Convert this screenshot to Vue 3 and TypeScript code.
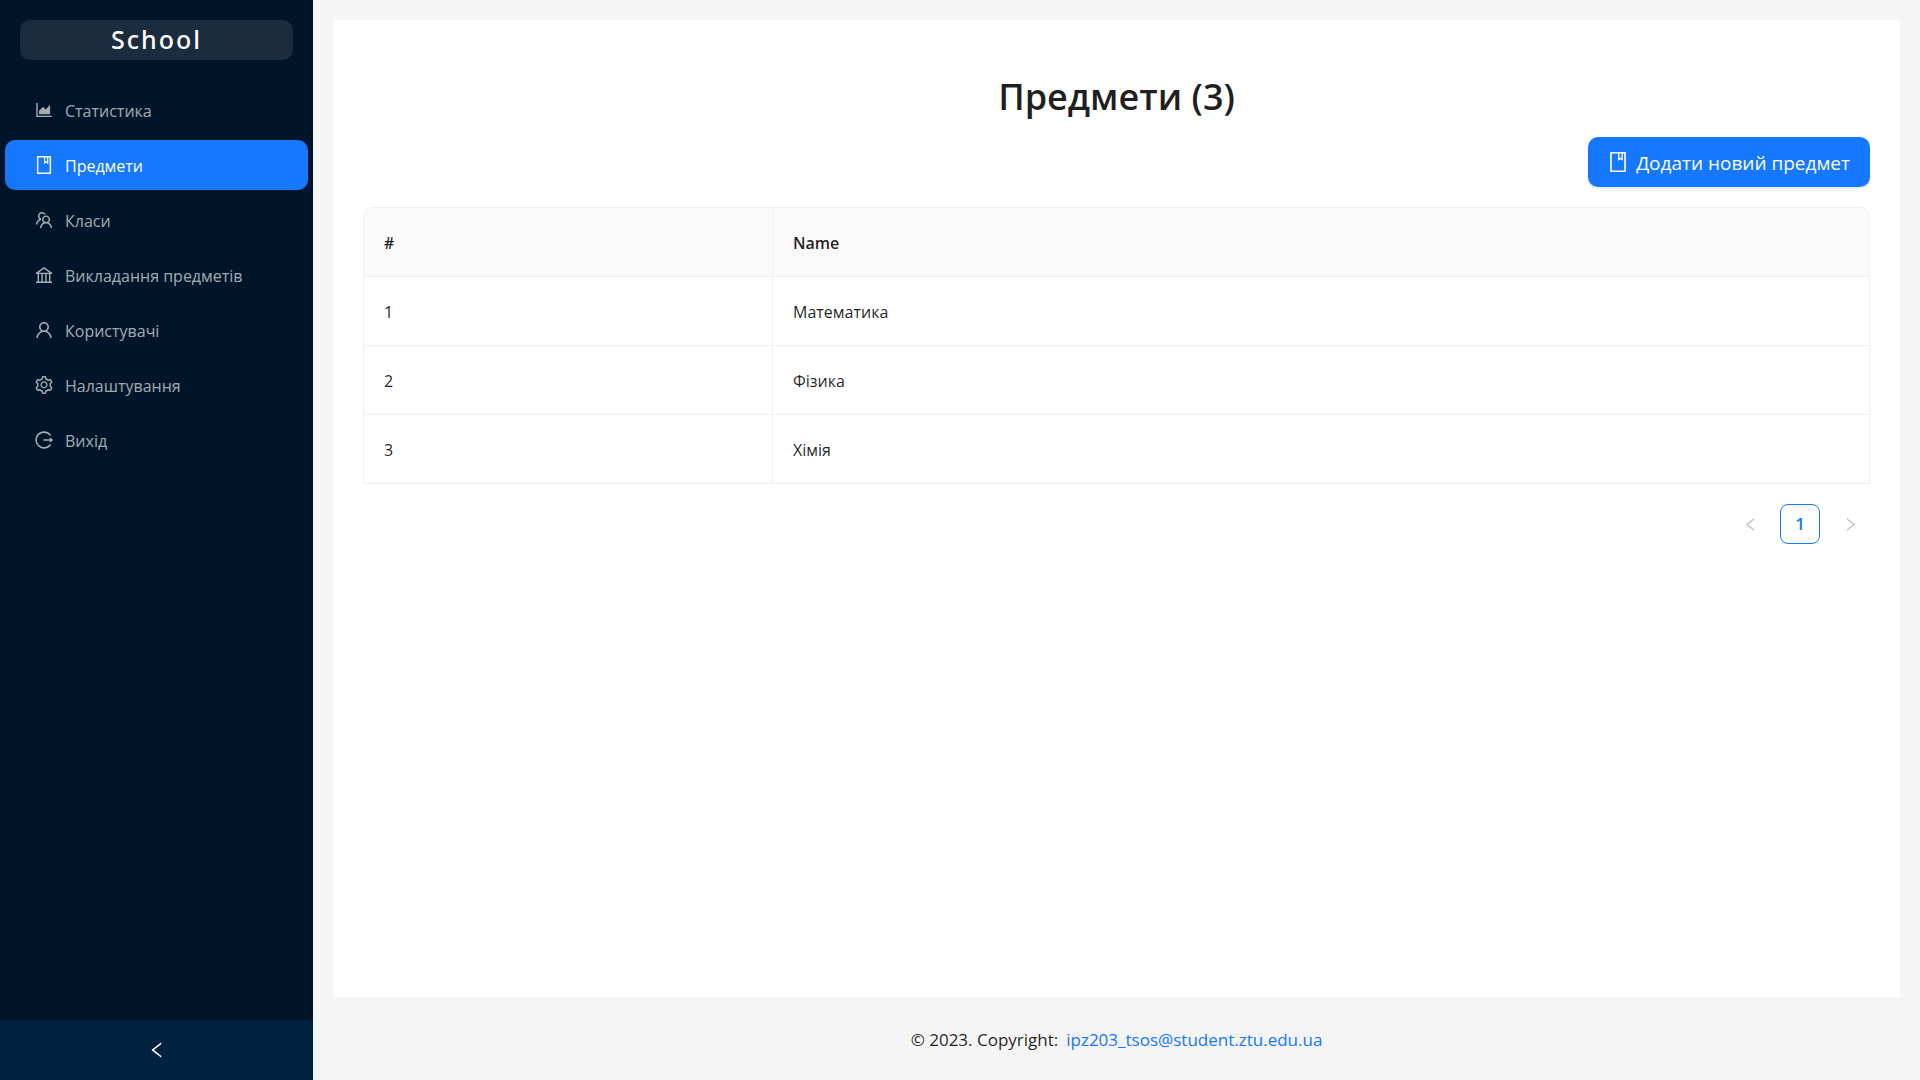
<script setup lang="ts">
import { ref } from 'vue'

interface MenuItem {
  key: string
  label: string
  icon: string
}

interface Subject {
  id: number
  name: string
}

const icons: Record<string, string> = {
  chart:
    'M888 792H200V168c0-4.4-3.6-8-8-8h-56c-4.4 0-8 3.6-8 8v688c0 4.4 3.6 8 8 8h752c4.4 0 8-3.6 8-8v-56c0-4.4-3.6-8-8-8zm-616-64h536c4.4 0 8-3.6 8-8V284c0-7.2-8.7-10.7-13.7-5.7L592 488.6l-125.4-124a8.03 8.03 0 00-11.3 0l-189 189.6a7.87 7.87 0 00-2.3 5.6V720c0 4.4 3.6 8 8 8z',
  book:
    'M832 64H192c-17.7 0-32 14.3-32 32v832c0 17.7 14.3 32 32 32h640c17.7 0 32-14.3 32-32V96c0-17.7-14.3-32-32-32zm-260 72h96v209.9L621.5 312 572 347.4V136zm220 752H232V136h280v296.9c0 3.3 1 6.6 3 9.3a15.9 15.9 0 0022.3 3.7l83.8-59.9 81.4 59.4c2.7 2 6 3.1 9.4 3.1 8.8 0 16-7.2 16-16V136h64v752z',
  team:
    'M824.2 699.9a301.55 301.55 0 00-86.4-60.4C783.1 602.8 812 546.8 812 484c0-110.8-92.4-201.7-203.2-200-109.1 1.7-197 90.6-197 200 0 62.8 29 118.8 74.2 155.5a300.95 300.95 0 00-86.4 60.4C345 754.6 314 826.8 312 903.8a8 8 0 008 8.2h56c4.3 0 7.9-3.4 8-7.7 1.9-58 25.4-112.3 66.7-153.5A226.62 226.62 0 01612 684c60.9 0 118.2 23.7 161.3 66.8C814.6 792 838 846.3 840 904.3c.1 4.3 3.7 7.7 8 7.7h56a8 8 0 008-8.2c-2-77-33-149.2-87.8-203.9zM612 612c-34.2 0-66.4-13.3-90.5-37.5a126.86 126.86 0 01-37.5-91.8c.3-32.8 13.4-64.5 36.3-88 24-24.6 56.1-38.3 90.4-38.7 33.9-.3 66.8 12.9 91 36.6 24.8 24.3 38.4 56.8 38.4 91.4 0 34.2-13.3 66.3-37.5 90.5A127.3 127.3 0 01612 612zM361.5 510.4c-.9-8.7-1.4-17.5-1.4-26.4 0-15.9 1.5-31.4 4.3-46.5.7-3.6-1.2-7.3-4.5-8.8-13.6-6.1-26.1-14.5-36.9-25.1a127.54 127.54 0 01-38.7-95.4c.9-32.1 13.8-62.6 36.3-85.6 24.7-25.3 57.9-39.1 93.2-38.7 31.9.3 62.7 12.6 86 34.4 7.9 7.4 14.7 15.6 20.4 24.4 2 3.1 5.9 4.4 9.3 3.2 17.6-6.1 36.2-10.4 55.3-12.4 5.6-.6 8.8-6.6 6.3-11.6-32.5-64.3-98.9-108.7-175.7-109.9-110.9-1.7-203.3 89.2-203.3 199.9 0 62.8 28.9 118.8 74.2 155.5-31.8 14.7-61.1 35-86.5 60.4-54.8 54.7-85.8 126.9-87.8 204a8 8 0 008 8.2h56.1c4.3 0 7.9-3.4 8-7.7 1.9-58 25.4-112.3 66.7-153.5 29.4-29.4 65.4-49.8 104.7-59.7 3.9-1 6.5-4.7 6-8.7z',
  bank:
    'M894 462c30.9 0 43.8-39.7 18.7-58L530.8 126.2a31.81 31.81 0 00-37.6 0L111.3 404c-25.1 18.2-12.2 58 18.8 58H192v374h-72c-4.4 0-8 3.6-8 8v52c0 4.4 3.6 8 8 8h784c4.4 0 8-3.6 8-8v-52c0-4.4-3.6-8-8-8h-72V462h62zM512 196.7l271.1 197.2H240.9L512 196.7zM264 462h117v374H264V462zm189 0h117v374H453V462zm307 374H642V462h118v374z',
  user:
    'M858.5 763.6a374 374 0 00-80.6-119.5 375.63 375.63 0 00-119.5-80.6c-.4-.2-.8-.3-1.2-.5C719.5 518 760 444.7 760 362c0-137-111-248-248-248S264 225 264 362c0 82.7 40.5 156 102.8 201.1-.4.2-.8.3-1.2.5-44.8 18.9-85 46-119.5 80.6a375.63 375.63 0 00-80.6 119.5A371.7 371.7 0 00136 901.8a8 8 0 008 8.2h60c4.4 0 7.9-3.5 8-7.8 2-77.2 33-149.5 87.8-204.3 56.7-56.7 132-87.9 212.2-87.9s155.5 31.2 212.2 87.9C779 752.7 810 825 812 902.2c.1 4.4 3.6 7.8 8 7.8h60a8 8 0 008-8.2c-1-47.8-10.9-94.3-29.5-138.2zM512 534c-45.9 0-89.1-17.9-121.6-50.4S340 407.9 340 362c0-45.9 17.9-89.1 50.4-121.6S466.1 190 512 190s89.1 17.9 121.6 50.4S684 316.1 684 362c0 45.9-17.9 89.1-50.4 121.6S557.9 534 512 534z',
  setting:
    'M924.8 625.7l-65.5-56c3.1-19 4.7-38.4 4.7-57.8s-1.6-38.8-4.7-57.8l65.5-56a32.03 32.03 0 009.3-35.2l-.9-2.6a443.74 443.74 0 00-79.7-137.9l-1.8-2.1a32.12 32.12 0 00-35.1-9.5l-81.3 28.9c-30-24.6-63.5-44-99.7-57.6l-15.7-85a32.05 32.05 0 00-25.8-25.7l-2.7-.5c-52.1-9.4-106.9-9.4-159 0l-2.7.5a32.05 32.05 0 00-25.8 25.7l-15.8 85.4a351.86 351.86 0 00-99 57.4l-81.9-29.1a32 32 0 00-35.1 9.5l-1.8 2.1a446.02 446.02 0 00-79.7 137.9l-.9 2.6c-4.5 12.5-.8 26.5 9.3 35.2l66.3 56.6c-3.1 18.8-4.6 38-4.6 57.1 0 19.2 1.5 38.4 4.6 57.1L99 625.5a32.03 32.03 0 00-9.3 35.2l.9 2.6c18.1 50.4 44.9 96.9 79.7 137.9l1.8 2.1a32.12 32.12 0 0035.1 9.5l81.9-29.1c29.8 24.5 63.1 43.9 99 57.4l15.8 85.4a32.05 32.05 0 0025.8 25.7l2.7.5a449.4 449.4 0 00159 0l2.7-.5a32.05 32.05 0 0025.8-25.7l15.7-85a350 350 0 0099.7-57.6l81.3 28.9a32 32 0 0035.1-9.5l1.8-2.1c34.8-41.1 61.6-87.5 79.7-137.9l.9-2.6c4.5-12.3.8-26.3-9.3-35zM788.3 465.9c2.5 15.1 3.8 30.6 3.8 46.1s-1.3 31-3.8 46.1l-6.6 40.1 74.7 63.9a370.03 370.03 0 01-42.6 73.6L721 702.8l-31.4 25.8c-23.9 19.6-50.5 35-79.3 45.8l-38.1 14.3-17.9 97a377.5 377.5 0 01-85 0l-17.9-97.2-37.8-14.5c-28.5-10.8-55-26.2-78.7-45.7l-31.4-25.9-93.4 33.2c-17-22.9-31.2-47.6-42.6-73.6l75.5-64.5-6.5-40c-2.4-14.9-3.7-30.3-3.7-45.5 0-15.3 1.2-30.6 3.7-45.5l6.5-40-75.5-64.5c11.3-26.1 25.6-50.7 42.6-73.6l93.4 33.2 31.4-25.9c23.7-19.5 50.2-34.9 78.7-45.7l37.9-14.3 17.9-97.2c28.1-3.2 56.8-3.2 85 0l17.9 97 38.1 14.3c28.7 10.8 55.4 26.2 79.3 45.8l31.4 25.8 92.8-32.9c17 22.9 31.2 47.6 42.6 73.6L781.8 426l6.5 39.9zM512 326c-97.2 0-176 78.8-176 176s78.8 176 176 176 176-78.8 176-176-78.8-176-176-176zm79.2 255.2A111.6 111.6 0 01512 614c-29.9 0-58-11.7-79.2-32.8A111.6 111.6 0 01400 502c0-29.9 11.7-58 32.8-79.2C454 401.6 482.1 390 512 390c29.9 0 58 11.6 79.2 32.8A111.6 111.6 0 01624 502c0 29.9-11.7 58-32.8 79.2z',
  logout:
    'M868 732h-70.3c-4.8 0-9.3 2.1-12.3 5.8-7 8.5-14.5 16.7-22.4 24.5a353.84 353.84 0 01-112.7 75.9A352.8 352.8 0 01512.4 866c-47.9 0-94.3-9.4-137.9-27.8a353.84 353.84 0 01-112.7-75.9 353.28 353.28 0 01-76-112.5C167.3 606.2 158 559.9 158 512s9.4-94.2 27.8-137.8c17.8-42.1 43.4-80 76-112.5s70.5-58.1 112.7-75.9c43.6-18.4 90-27.8 137.9-27.8 47.9 0 94.3 9.3 137.9 27.8 42.2 17.8 80.1 43.4 112.7 75.9 7.9 7.9 15.3 16.1 22.4 24.5 3 3.7 7.6 5.8 12.3 5.8H868c6.3 0 10.2-7 6.7-12.3C798 160.5 663.8 81.6 511.3 82 271.7 82.6 79.6 277.1 82 516.4 84.4 751.9 276.2 942 512.4 942c152.1 0 285.7-78.8 362.3-197.7 3.4-5.3-.4-12.3-6.7-12.3zm88.9-226.3L815 393.7c-5.3-4.2-13-.4-13 6.3v76H488c-4.4 0-8 3.6-8 8v56c0 4.4 3.6 8 8 8h314v76c0 6.7 7.8 10.5 13 6.3l141.9-112a8 8 0 000-12.6z',
  left:
    'M724 218.3V141c0-6.7-7.7-10.4-12.9-6.3L260.3 486.8a31.86 31.86 0 000 50.3l450.8 352.1c5.3 4.1 12.9.4 12.9-6.3v-77.3c0-4.9-2.3-9.6-6.1-12.6l-360-281 360-281.1c3.8-3 6.1-7.7 6.1-12.6z',
  right:
    'M765.7 486.8L314.9 134.7A7.97 7.97 0 00302 141v77.3c0 4.9 2.3 9.6 6.1 12.6l360 281.1-360 281.1c-3.9 3-6.1 7.7-6.1 12.6V883c0 6.7 7.7 10.4 12.9 6.3l450.8-352.1a31.96 31.96 0 000-50.4z',
}

const menu: MenuItem[] = [
  { key: 'statistics', label: 'Статистика', icon: 'chart' },
  { key: 'subjects', label: 'Предмети', icon: 'book' },
  { key: 'classes', label: 'Класи', icon: 'team' },
  { key: 'teaching', label: 'Викладання предметів', icon: 'bank' },
  { key: 'users', label: 'Користувачі', icon: 'user' },
  { key: 'settings', label: 'Налаштування', icon: 'setting' },
  { key: 'logout', label: 'Вихід', icon: 'logout' },
]

const subjects: Subject[] = [
  { id: 1, name: 'Математика' },
  { id: 2, name: 'Фізика' },
  { id: 3, name: 'Хімія' },
]

const active = ref('subjects')
</script>

<template>
  <div class="layout">
    <aside class="sider">
      <div class="logo">School</div>
      <nav class="menu">
        <a
          v-for="item in menu"
          :key="item.key"
          class="menu-item"
          :class="{ selected: item.key === active }"
          :href="'#' + item.key"
          @click.prevent="active = item.key"
        >
          <svg class="icon" viewBox="64 64 896 896" aria-hidden="true"><path :d="icons[item.icon]" /></svg>
          <span class="label">{{ item.label }}</span>
        </a>
      </nav>
      <button class="trigger" type="button" aria-label="Згорнути меню">
        <svg class="icon" viewBox="64 64 896 896" aria-hidden="true"><path :d="icons.left" /></svg>
      </button>
    </aside>

    <div class="page">
      <main class="content">
        <h1 class="title">Предмети ({{ subjects.length }})</h1>
        <div class="actions">
          <button class="add" type="button">
            <svg class="icon icon-large" viewBox="64 64 896 896" aria-hidden="true"><path :d="icons.book" /></svg>
            <span class="label">Додати новий предмет</span>
          </button>
        </div>
        <table class="table">
          <colgroup>
            <col class="col-number" />
            <col />
          </colgroup>
          <thead>
            <tr>
              <th scope="col">#</th>
              <th scope="col">Name</th>
            </tr>
          </thead>
          <tbody>
            <tr v-for="subject in subjects" :key="subject.id">
              <td>{{ subject.id }}</td>
              <td>{{ subject.name }}</td>
            </tr>
          </tbody>
        </table>
        <nav class="pagination" aria-label="Сторінки">
          <button class="page-button" type="button" disabled aria-label="Попередня">
            <svg class="icon icon-small" viewBox="64 64 896 896" aria-hidden="true"><path :d="icons.left" /></svg>
          </button>
          <button class="page-button current" type="button" aria-current="page">1</button>
          <button class="page-button" type="button" disabled aria-label="Наступна">
            <svg class="icon icon-small" viewBox="64 64 896 896" aria-hidden="true"><path :d="icons.right" /></svg>
          </button>
        </nav>
      </main>
      <footer class="footer">
        <span>© 2023. Copyright:</span>
        <a href="mailto:ipz203_tsos@student.ztu.edu.ua">ipz203_tsos@student.ztu.edu.ua</a>
      </footer>
    </div>
  </div>
</template>

<style>
body {
  margin: 0;
}
</style>

<style scoped>
.layout,
.layout * {
  box-sizing: border-box;
}

.layout {
  display: flex;
  min-height: 100vh;
  background: #f5f5f5;
  color: rgba(0, 0, 0, 0.88);
  font-family: 'Open Sans', 'Noto Sans', sans-serif;
  font-size: 17px;
  line-height: 28px;
}

button {
  font: inherit;
  cursor: pointer;
}

.icon {
  flex: none;
  width: 18px;
  height: 18px;
  fill: currentColor;
}

.icon-large {
  width: 20px;
  height: 20px;
}

.icon-small {
  width: 15px;
  height: 15px;
}

.label {
  padding-top: 2px;
}

.sider {
  flex: none;
  display: flex;
  flex-direction: column;
  width: 313px;
  background: #001529;
}

.logo {
  height: 40px;
  margin: 20px;
  border-radius: 10px;
  background: rgba(255, 255, 255, 0.1);
  color: #fff;
  font-family: 'Noto Sans', sans-serif;
  font-size: 25px;
  font-weight: 500;
  line-height: 38px;
  letter-spacing: 2px;
  text-align: center;
}

.menu {
  flex: 1;
  display: flex;
  flex-direction: column;
  gap: 5px;
  padding: 5px;
}

.menu-item {
  display: flex;
  align-items: center;
  gap: 12px;
  height: 50px;
  padding: 0 30px;
  border-radius: 10px;
  color: rgba(255, 255, 255, 0.65);
  font-size: 16px;
  text-decoration: none;
  white-space: nowrap;
}

.menu-item.selected {
  background: #1677ff;
  color: #fff;
}

.trigger {
  display: flex;
  align-items: center;
  justify-content: center;
  height: 60px;
  padding: 0;
  border: 0;
  background: #002140;
  color: #fff;
}

.page {
  flex: 1;
  display: flex;
  flex-direction: column;
  min-width: 0;
}

.content {
  flex: 1;
  margin: 20px 20px 0;
  padding: 30px;
  background: #fff;
}

.title {
  margin: 22px 0 15px;
  font-size: 36px;
  font-weight: 600;
  line-height: 50px;
  text-align: center;
}

.actions {
  display: flex;
  justify-content: flex-end;
  margin-bottom: 20px;
}

.add {
  display: flex;
  align-items: center;
  gap: 8px;
  height: 50px;
  padding: 0 20px;
  border: 0;
  border-radius: 10px;
  background: #1677ff;
  box-shadow: 0 2px 0 rgba(5, 145, 255, 0.1);
  color: #fff;
  font-size: 19px;
}

.table {
  width: 100%;
  border: 1px solid #f0f0f0;
  border-bottom: 0;
  border-radius: 10px 10px 0 0;
  border-spacing: 0;
  table-layout: fixed;
}

.col-number {
  width: 408px;
}

.table th,
.table td {
  padding: 21px 20px 19px;
  border-bottom: 1px solid #f0f0f0;
  font-size: 16px;
  text-align: left;
}

.table th {
  background: #fafafa;
  font-weight: 600;
}

.table th:first-child {
  border-top-left-radius: 10px;
}

.table th:last-child {
  border-top-right-radius: 10px;
}

.table th + th,
.table td + td {
  border-left: 1px solid #f0f0f0;
}

.pagination {
  display: flex;
  justify-content: flex-end;
  gap: 10px;
  margin-top: 20px;
}

.page-button {
  display: flex;
  align-items: center;
  justify-content: center;
  width: 40px;
  height: 40px;
  padding: 0;
  border: 1px solid transparent;
  border-radius: 8px;
  background: #fff;
  color: rgba(0, 0, 0, 0.25);
}

.page-button.current {
  border-color: #1677ff;
  color: #1677ff;
  font-weight: 600;
}

.footer {
  display: flex;
  justify-content: center;
  gap: 8px;
  padding: 29px 60px 26px;
}

.footer a {
  color: #1677ff;
  text-decoration: none;
}
</style>
